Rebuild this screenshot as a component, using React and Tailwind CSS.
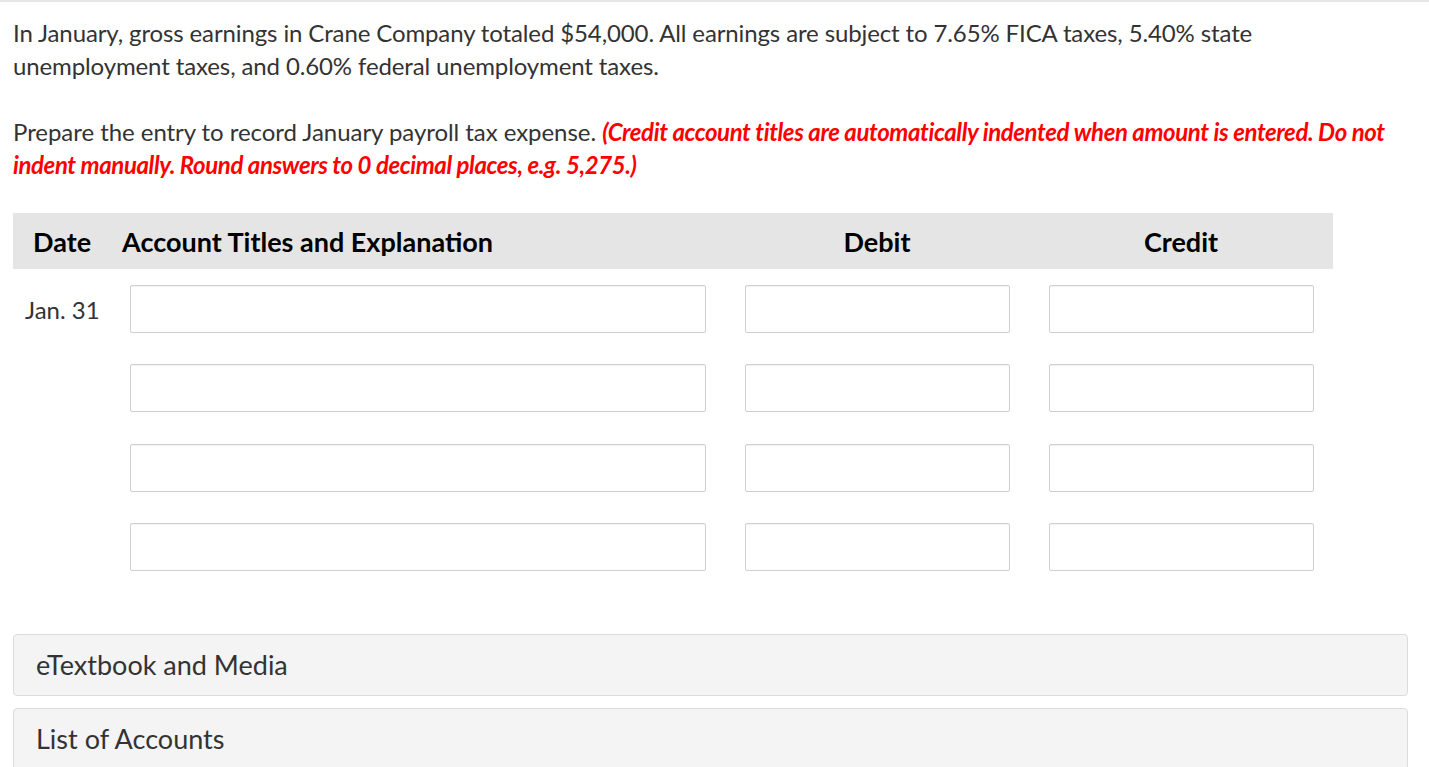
import React from "react";

const rows = [0, 1, 2, 3];

function Box({ w }) {
  return (
    <div
      className={`h-[48px] ${w} rounded-[2px] border border-[#cfcfcf] bg-white shadow-[inset_0_1px_1px_rgba(0,0,0,0.05)]`}
    />
  );
}

export default function App() {
  return (
    <div className="min-h-screen bg-white border-t-2 border-[#e6e6e6]" style={{ fontFamily: "Lato, 'Open Sans', sans-serif" }}>
      <div className="pl-[13px] pr-[21px] pt-[14px] text-[24px] leading-[33px] text-[#333]">
        <p className="tracking-[-0.12px]">
          In January, gross earnings in Crane Company totaled $54,000. All earnings are subject to 7.65% FICA taxes, 5.40% state
          <br />
          unemployment taxes, and 0.60% federal unemployment taxes.
        </p>
        <p className="mt-[33px]">
          <span className="tracking-[-0.05px]">Prepare the entry to record January payroll tax expense. </span>
          <span className="font-bold italic text-[#ff0000] tracking-[-0.4px]">
            (Credit account titles are automatically indented when amount is entered. Do not indent manually. Round answers to 0 decimal places, e.g. 5,275.)
          </span>
        </p>

        <div className="mt-[32px] w-[1320px]">
          <div className="flex h-[56px] items-center bg-[#e5e5e5] text-[27px] font-bold text-black">
            <div className="w-[105px] pl-[20px]">Date</div>
            <div className="w-[607px] pl-[4px]">Account Titles and Explanation</div>
            <div className="w-[304px] text-center">Debit</div>
            <div className="w-[304px] text-center">Credit</div>
          </div>
          <div className="pt-[16px] flex flex-col gap-[31.3px]">
            {rows.map((r) => (
              <div key={r} className="flex h-[48px] items-center">
                <div className="w-[105px] pl-[12px] text-[#333]">{r === 0 ? "Jan. 31" : ""}</div>
                <div className="w-[607px] pl-[12px]">
                  <Box w="w-[576px]" />
                </div>
                <div className="w-[304px] pl-[20px]">
                  <Box w="w-[265px]" />
                </div>
                <div className="w-[304px] pl-[20px]">
                  <Box w="w-[265px]" />
                </div>
              </div>
            ))}
          </div>
        </div>

        <div className="mt-[63px] flex flex-col gap-[12px]">
          <div className="h-[62px] rounded-[4px] border border-[#dcdcdc] bg-[#f4f4f4] pl-[22px] flex items-center text-[27px] text-[#333]">
            eTextbook and Media
          </div>
          <div className="h-[62px] rounded-[4px] border border-[#dcdcdc] bg-[#f4f4f4] pl-[22px] flex items-center text-[27px] text-[#333]">
            List of Accounts
          </div>
        </div>
      </div>
    </div>
  );
}
